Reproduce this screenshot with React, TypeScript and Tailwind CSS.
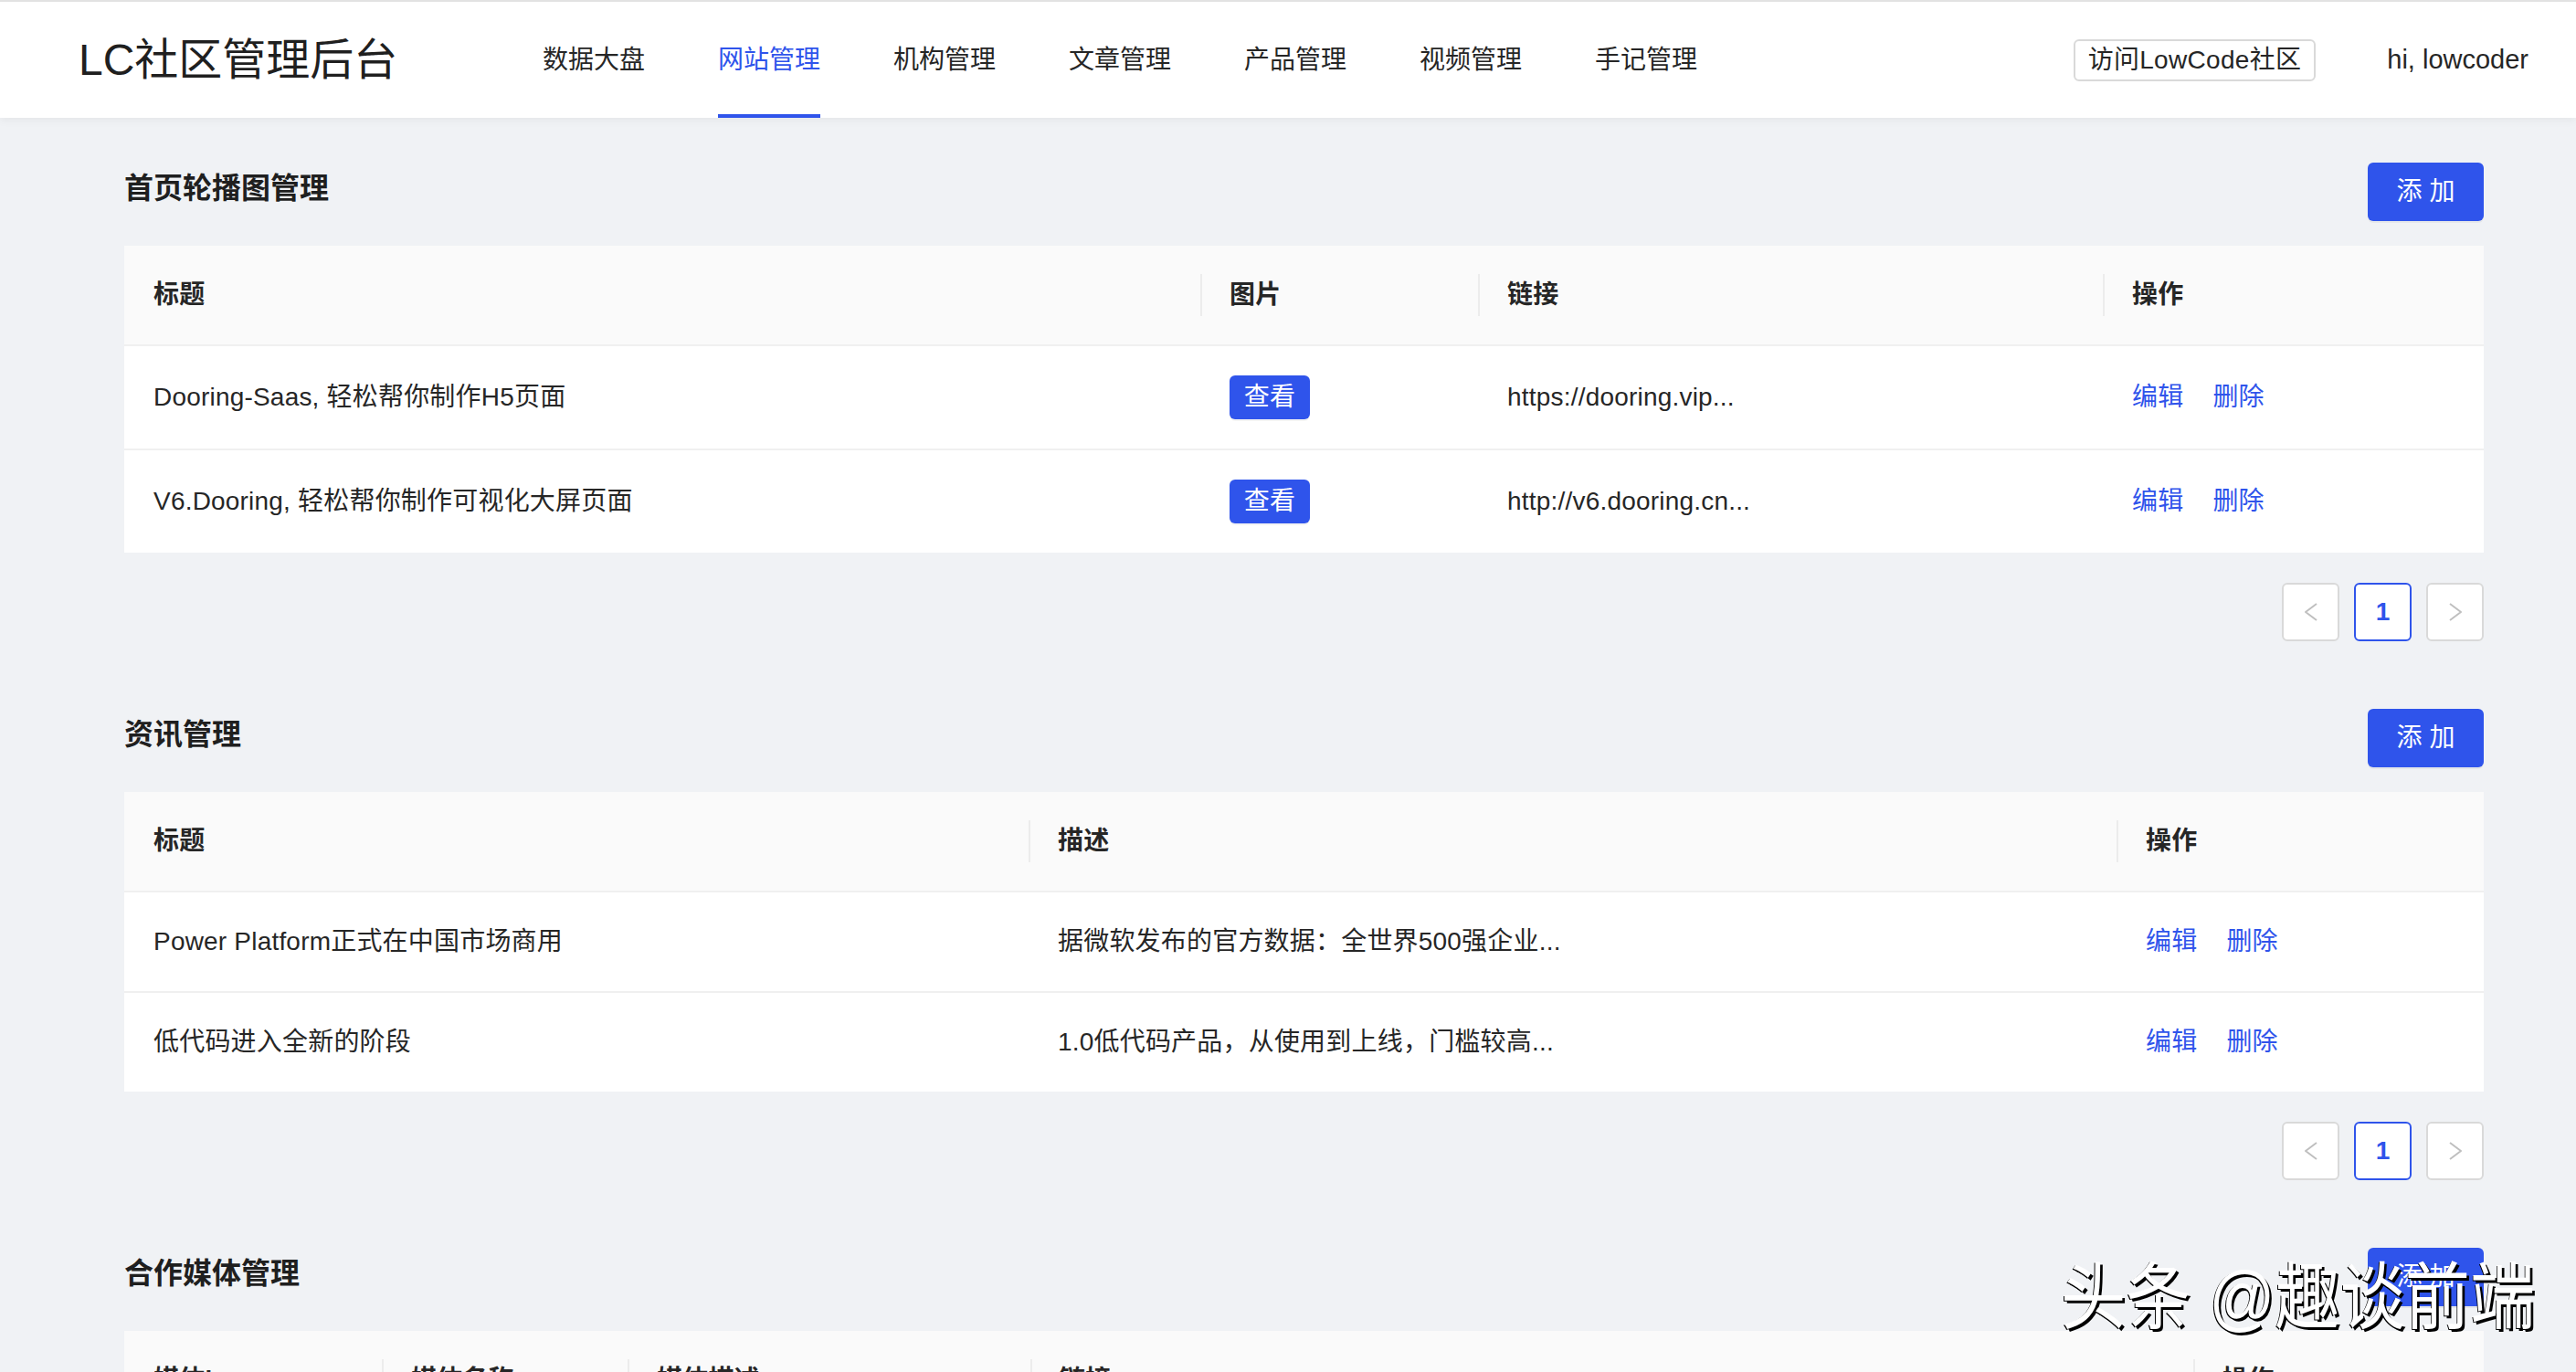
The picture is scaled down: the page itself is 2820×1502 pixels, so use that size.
import React from "react";

const font = "font-['Liberation_Sans','Noto_Sans_CJK_SC',sans-serif]";

const navItems = ["数据大盘", "网站管理", "机构管理", "文章管理", "产品管理", "视频管理", "手记管理"];

type Col = { title: string; width: number };

const Chevron = ({ dir }: { dir: "left" | "right" }) => (
	<svg width="14" height="20" viewBox="0 0 14 20" fill="none">
		<polyline
			points={dir === "left" ? "13,1 1,10 13,19" : "1,1 13,10 1,19"}
			stroke="#bfbfbf"
			strokeWidth="2"
			strokeLinejoin="round"
		/>
	</svg>
);

const Pagination = () => (
	<div className="flex justify-end gap-4 mt-[33px]">
		<div className="w-[63px] h-[64px] bg-white border-2 border-[#d9d9d9] rounded-[6px] flex items-center justify-center">
			<Chevron dir="left" />
		</div>
		<div className="w-[63px] h-[64px] bg-white border-2 border-[#2f54eb] rounded-[6px] flex items-center justify-center text-[28px] font-semibold text-[#2f54eb]">
			1
		</div>
		<div className="w-[63px] h-[64px] bg-white border-2 border-[#d9d9d9] rounded-[6px] flex items-center justify-center">
			<Chevron dir="right" />
		</div>
	</div>
);

const SectionHeader = ({ title }: { title: string }) => (
	<div className="flex items-center justify-between h-[64px] mb-[27px]">
		<h2 className="text-[32px] font-semibold text-[#1f1f1f] -mt-[8px]">{title}</h2>
		<button
			type="button"
			className="w-[127px] h-[64px] rounded-[6px] bg-[#2f54eb] text-white text-[28px] shadow-[0_2px_0_rgba(0,0,0,0.045)]"
		>
			添 加
		</button>
	</div>
);

const Actions = () => (
	<div className="flex gap-[32px] text-[#2f54eb]">
		<span>编辑</span>
		<span>删除</span>
	</div>
);

const DataTable = ({ cols, rows }: { cols: Col[]; rows: React.ReactNode[][] }) => (
	<table className="w-full table-fixed border-collapse text-[28px] leading-[44px] text-[#262626] tracking-[0.2px]">
		<colgroup>
			{cols.map((c) => (
				<col key={c.title} style={{ width: c.width }} />
			))}
		</colgroup>
		<thead>
			<tr className="bg-[#fafafa]">
				{cols.map((c, i) => (
					<th
						key={c.title}
						className="relative text-left font-semibold px-[32px] py-[32px] border-b-2 border-[#f0f0f0]"
					>
						{i > 0 && (
							<span className="absolute left-0 top-1/2 -translate-y-1/2 w-[2px] h-[46px] bg-[#ececec]" />
						)}
						{c.title}
					</th>
				))}
			</tr>
		</thead>
		<tbody className="bg-white">
			{rows.map((r, ri) => (
				<tr key={ri}>
					{r.map((cell, ci) => (
						<td
							key={ci}
							className={`px-[32px] py-[32px] whitespace-nowrap overflow-hidden ${
								ri < rows.length - 1 ? "border-b-2 border-[#f0f0f0]" : ""
							}`}
						>
							{cell}
						</td>
					))}
				</tr>
			))}
		</tbody>
	</table>
);

const ViewButton = () => (
	<span className="inline-flex items-center justify-center w-[88px] h-[48px] rounded-[6px] bg-[#2f54eb] text-white text-[28px] align-middle shadow-[0_2px_0_rgba(0,0,0,0.045)]">
		查看
	</span>
);

export default function App() {
	return (
		<div className={`relative h-[1502px] overflow-hidden bg-[#f0f2f5] ${font}`}>
			<header className="h-[129px] bg-white border-t-2 border-[#e2e2e2] flex items-stretch shadow-[0_2px_10px_rgba(0,0,0,0.06)] relative z-10">
				<div className="w-[594px] pl-[86px] flex items-center text-[48px] text-[#1f1f1f]">
					LC社区管理后台
				</div>
				<nav className="flex gap-[80px] text-[28px]">
					{navItems.map((item) => (
						<div
							key={item}
							className={`flex items-center border-b-4 pt-[4px] ${
								item === "网站管理"
									? "border-[#2f54eb] text-[#2f54eb]"
									: "border-transparent text-[#262626]"
							}`}
						>
							{item}
						</div>
					))}
				</nav>
				<div className="ml-auto flex items-center pr-[52px]">
					<button
						type="button"
						className="h-[46px] px-[14px] border-2 border-[#d9d9d9] rounded-[6px] text-[28px] text-[#262626] leading-none tracking-[0.3px]"
					>
						访问LowCode社区
					</button>
					<span className="ml-[78px] text-[29px] text-[#262626]">hi, lowcoder</span>
				</div>
			</header>

			<main className="pl-[136px] pr-[101px] pt-[49px]">
				<section>
					<SectionHeader title="首页轮播图管理" />
					<DataTable
						cols={[
							{ title: "标题", width: 1178 },
							{ title: "图片", width: 304 },
							{ title: "链接", width: 684 },
							{ title: "操作", width: 417 },
						]}
						rows={[
							["Dooring-Saas, 轻松帮你制作H5页面", <ViewButton key="v" />, "https://dooring.vip...", <Actions key="a" />],
							["V6.Dooring, 轻松帮你制作可视化大屏页面", <ViewButton key="v" />, "http://v6.dooring.cn...", <Actions key="a" />],
						]}
					/>
					<Pagination />
				</section>

				<section className="mt-[74px]">
					<SectionHeader title="资讯管理" />
					<DataTable
						cols={[
							{ title: "标题", width: 990 },
							{ title: "描述", width: 1191 },
							{ title: "操作", width: 402 },
						]}
						rows={[
							["Power Platform正式在中国市场商用", "据微软发布的官方数据：全世界500强企业...", <Actions key="a" />],
							["低代码进入全新的阶段", "1.0低代码产品，从使用到上线，门槛较高...", <Actions key="a" />],
						]}
					/>
					<Pagination />
				</section>

				<section className="mt-[74px]">
					<SectionHeader title="合作媒体管理" />
					<DataTable
						cols={[
							{ title: "媒体logo", width: 282 },
							{ title: "媒体名称", width: 269 },
							{ title: "媒体描述", width: 441 },
							{ title: "链接", width: 1273 },
							{ title: "操作", width: 318 },
						]}
						rows={[]}
					/>
				</section>
			</main>

			<div className="absolute left-[2256px] top-[1366px] origin-left scale-x-[0.89] text-[80px] leading-[110px] text-white whitespace-nowrap [text-shadow:3px_3px_0_#000,-1px_1px_0_#000]">
				头条 @趣谈前端
			</div>
		</div>
	);
}
